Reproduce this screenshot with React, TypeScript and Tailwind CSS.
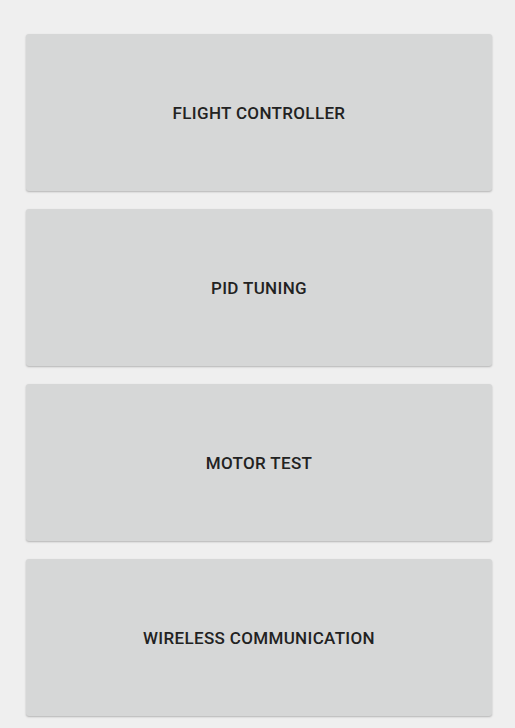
const items = ["FLIGHT CONTROLLER", "PID TUNING", "MOTOR TEST", "WIRELESS COMMUNICATION"];

export default function App() {
  return (
    <div className="min-h-[728px] w-full bg-[#efefef] pl-[26px] pr-[23px] pt-[34px] font-['Roboto',sans-serif]">
      <div className="flex flex-col gap-[18px]">
        {items.map((label) => (
          <button
            key={label}
            className="flex h-[157px] w-full items-center justify-center rounded-[3px] bg-[#d6d7d7] pt-[3px] text-[17px] font-medium tracking-[0.02em] text-[#222] shadow-[0_1px_2px_rgba(0,0,0,0.25)]"
          >
            {label}
          </button>
        ))}
      </div>
    </div>
  );
}
